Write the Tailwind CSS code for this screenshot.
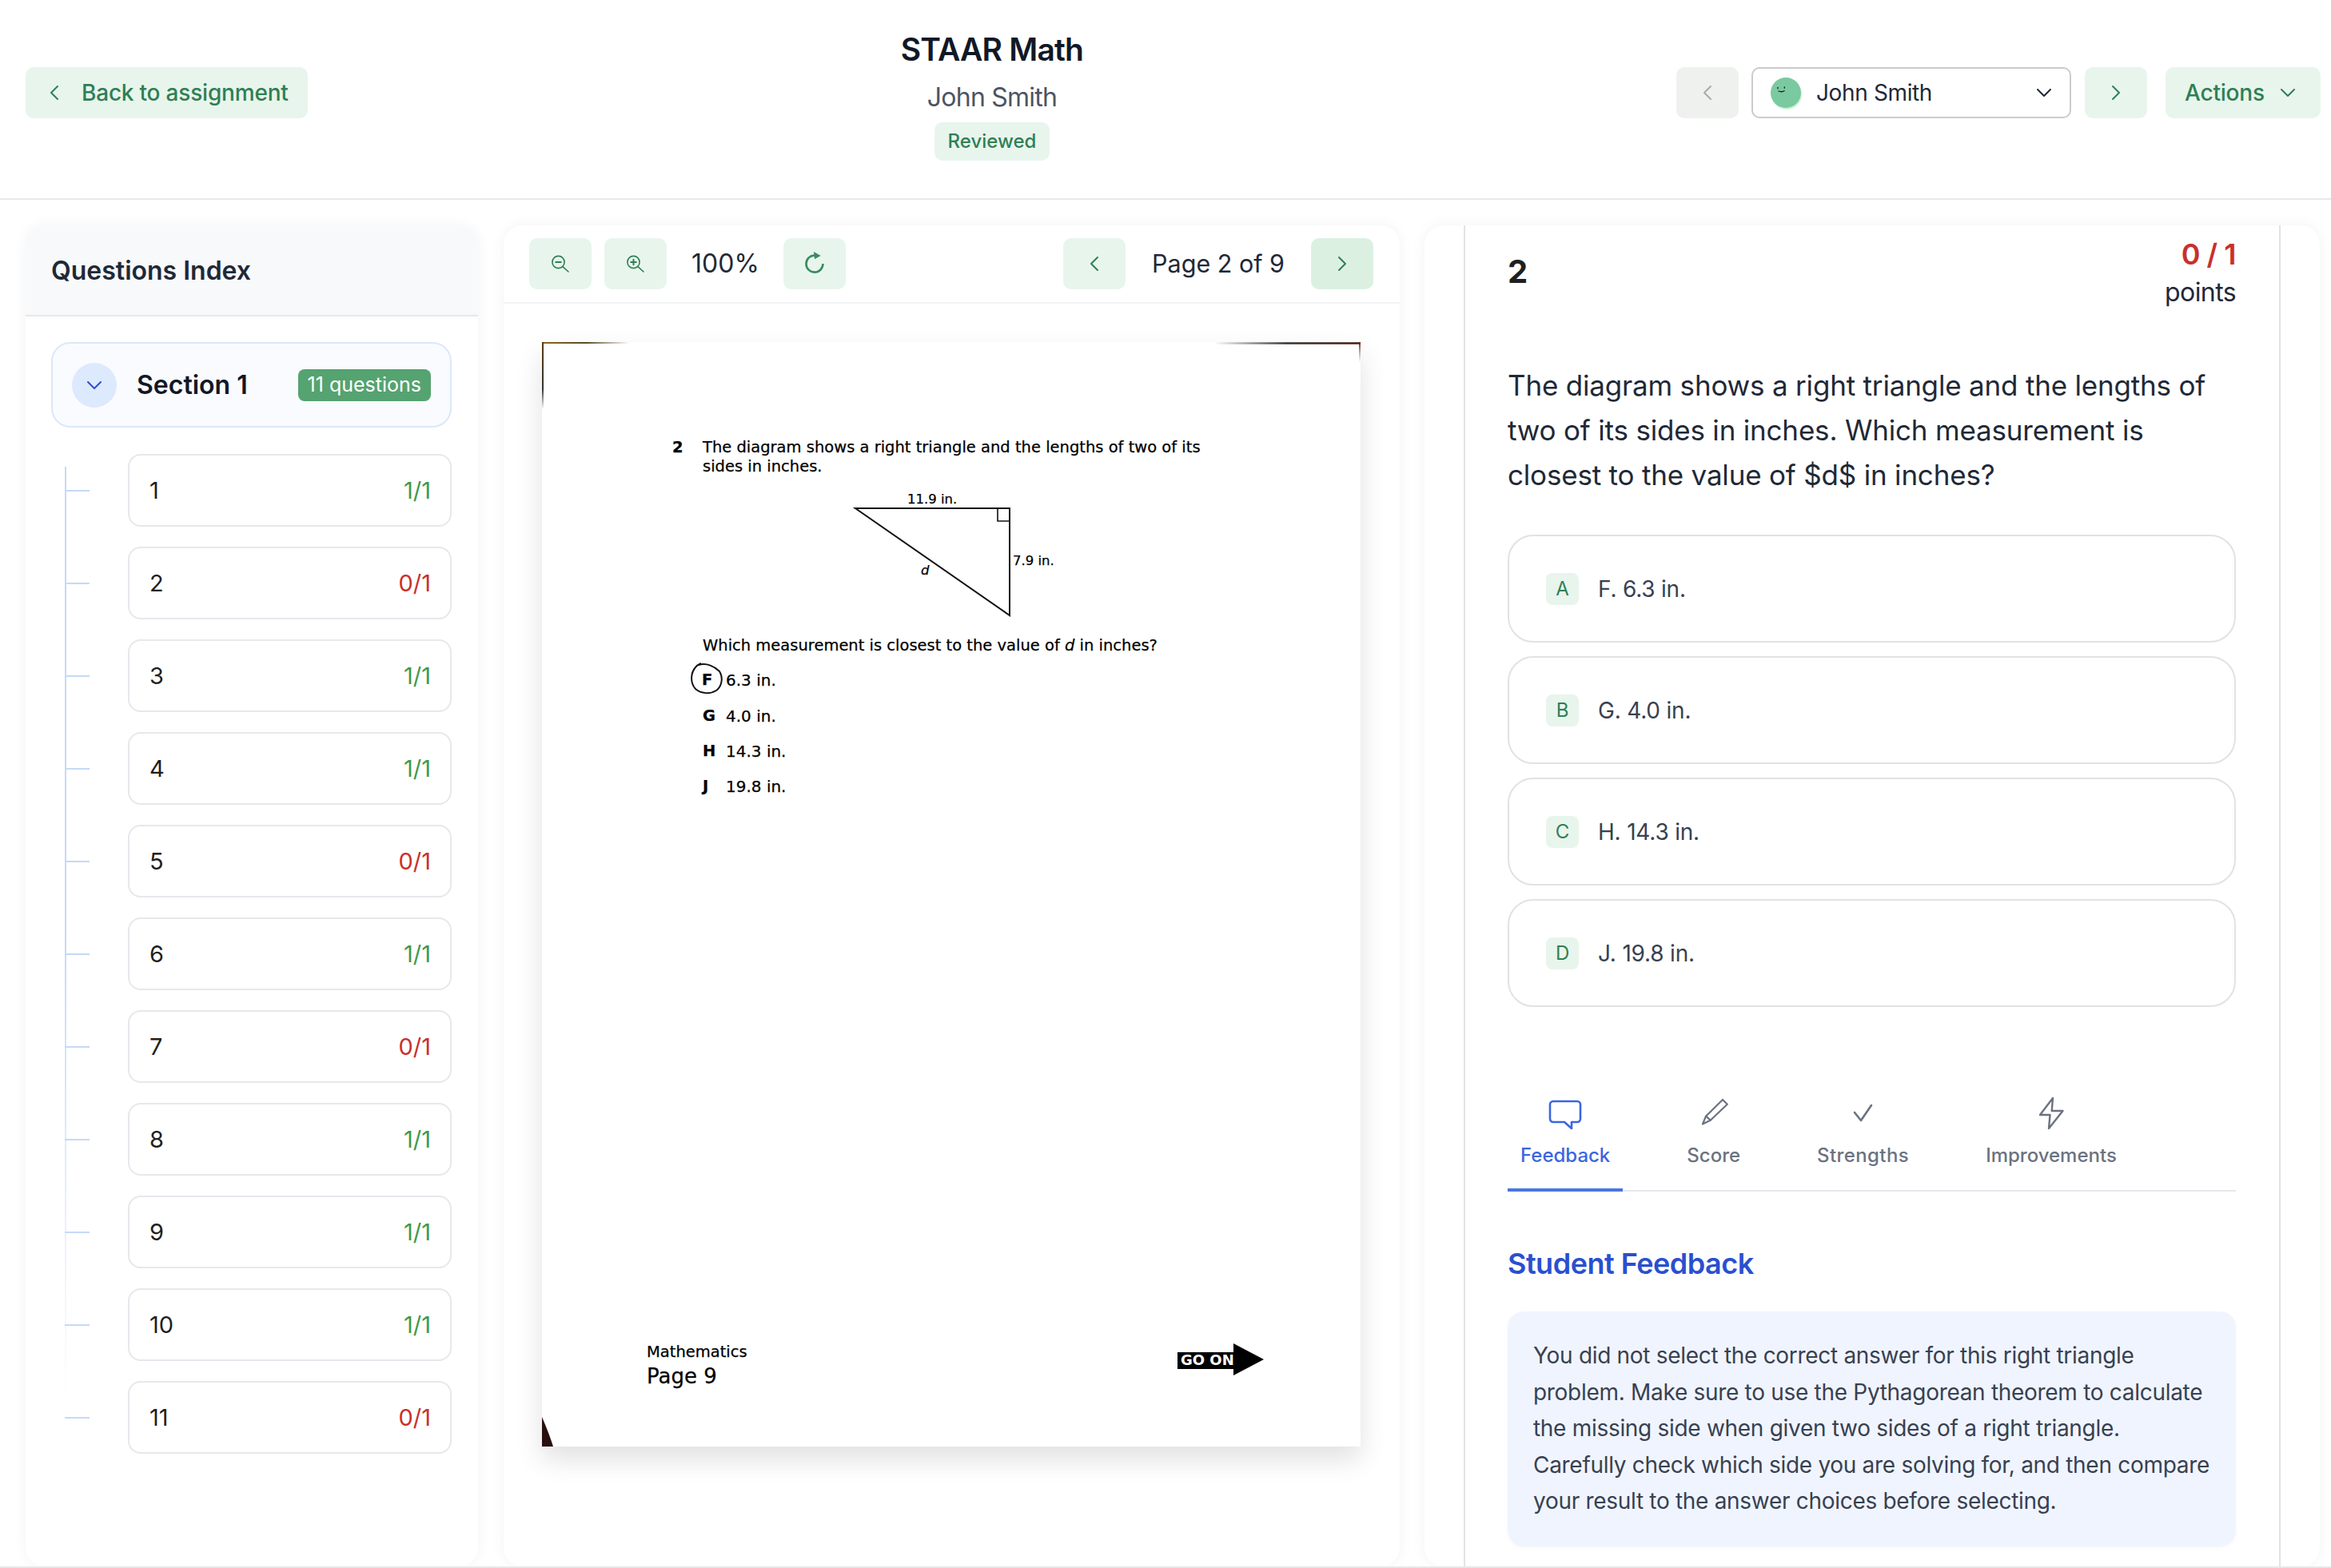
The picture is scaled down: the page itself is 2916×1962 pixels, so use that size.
<!DOCTYPE html>
<html lang="en">
<head>
    <meta charset="UTF-8">
    <title>STAAR Math - John Smith</title>
    <script src="https://cdn.jsdelivr.net/npm/@tailwindcss/browser@4"></script>
</head>
<body class="bg-white font-['Inter',sans-serif] text-[#111827] overflow-hidden">
<div class="w-[2916px] h-[1962px] flex flex-col overflow-hidden border-b-2 border-[#e5e7eb]">

    <!-- Header -->
    <header class="h-[250px] shrink-0 border-b-2 border-[#e7e7ec] pb-[16px] pl-[32px] pr-[13px] flex items-center justify-between">
        <button class="h-[64px] w-[353px] rounded-[10px] bg-[#e8f5ec] text-[#2f7f55] flex items-center pl-[30px] gap-[28px] text-[28px] font-medium tracking-[-0.2px]">
            <svg class="w-[12px] h-[20px]" viewBox="0 0 12 20" fill="none" stroke="currentColor" stroke-width="2" stroke-linecap="round" stroke-linejoin="round"><path d="M10 2 2 10l8 8"/></svg>
            <span>Back to assignment</span>
        </button>
        <div class="flex flex-col items-center">
            <div class="text-[39px] leading-[60px] font-semibold text-[#111827] tracking-[-0.8px]">STAAR Math</div>
            <div class="text-[32px] leading-[48px] text-[#4b5563] mt-[6px] tracking-[-0.75px]">John Smith</div>
            <div class="mt-[7px] h-[48px] px-[17px] rounded-[10px] bg-[#e8f5ec] text-[#2f7f55] text-[24px] font-medium flex items-center">Reviewed</div>
        </div>
        <div class="flex items-center">
            <button class="w-[78px] h-[64px] rounded-[10px] bg-[#eff1ef] text-[#a8aca9] flex items-center justify-center">
                <svg class="w-[12px] h-[20px]" viewBox="0 0 12 20" fill="none" stroke="currentColor" stroke-width="2" stroke-linecap="round" stroke-linejoin="round"><path d="M10 2 2 10l8 8"/></svg>
            </button>
            <div class="ml-[16px] w-[400px] h-[64px] rounded-[10px] border-2 border-[#cbcbcb] flex items-center pl-[22px] pr-[22px]">
                <span class="w-[38px] h-[38px] rounded-full bg-[#7bc9a0] shadow-[1px_2px_0_#c9f5d4] shrink-0">
                    <svg class="w-[38px] h-[38px]" viewBox="0 0 38 38" fill="none" stroke="#111827" stroke-width="1.3" stroke-linecap="round"><path d="M9 12.5v1.2M17.3 12v1.2M10 17c2.5 1 5 1 7-.3"/></svg>
                </span>
                <span class="ml-[19px] text-[28px] text-[#1f2937] tracking-[-0.37px]">John Smith</span>
                <svg class="ml-auto w-[20px] h-[12px]" viewBox="0 0 20 12" fill="none" stroke="#1f2937" stroke-width="2" stroke-linecap="round" stroke-linejoin="round"><path d="m2 2 8 8 8-8"/></svg>
            </div>
            <button class="ml-[17px] w-[78px] h-[64px] rounded-[10px] bg-[#e8f5ec] text-[#2f7f55] flex items-center justify-center">
                <svg class="w-[12px] h-[20px]" viewBox="0 0 12 20" fill="none" stroke="currentColor" stroke-width="2" stroke-linecap="round" stroke-linejoin="round"><path d="m2 2 8 8-8 8"/></svg>
            </button>
            <button class="ml-[23px] w-[194px] h-[64px] rounded-[10px] bg-[#e8f5ec] text-[#2f7f55] flex items-center pl-[24px] gap-[19px] text-[28px] font-medium tracking-[-0.2px]">
                <span>Actions</span>
                <svg class="w-[20px] h-[12px]" viewBox="0 0 20 12" fill="none" stroke="currentColor" stroke-width="2" stroke-linecap="round" stroke-linejoin="round"><path d="m2 2 8 8 8-8"/></svg>
            </button>
        </div>
    </header>

    <!-- Panels -->
    <main class="flex-1 min-h-0 pt-[32px] pl-[32px] flex">

        <!-- Questions index -->
        <aside class="w-[566px] shrink-0 rounded-[24px] bg-white shadow-[0_0_18px_rgba(0,0,0,0.05)] overflow-hidden">
            <div class="h-[114px] bg-[#f8f9fb] border-b-2 border-[#e7e7ec] pl-[32px] pt-[2px] flex items-center">
                <h2 class="text-[32px] font-semibold text-[#1f2937]">Questions Index</h2>
            </div>
            <div class="pt-[32px] pl-[32px] pr-[33px]">
                <div class="h-[107px] rounded-[24px] border-2 border-[#dbe7fb] bg-[#fafbff] flex items-center pl-[24px] pr-[24px] pt-[1px]">
                    <span class="w-[56px] h-[56px] rounded-full bg-[#dde9fc] flex items-center justify-center">
                        <svg class="w-[20px] h-[12px]" viewBox="0 0 20 12" fill="none" stroke="#2a4fd0" stroke-width="2" stroke-linecap="round" stroke-linejoin="round"><path d="m2 2 8 8 8-8"/></svg>
                    </span>
                    <span class="ml-[25px] text-[32px] font-semibold text-[#111827]">Section 1</span>
                    <span class="ml-auto h-[40px] px-[12px] rounded-[8px] bg-[#55a370] text-white text-[25px] flex items-center">11 questions</span>
                </div>
                <div id="questionList" class="relative mt-[33px] flex flex-col gap-[25px]">
                    <div class="absolute left-[17px] top-[16px] w-[2px] h-[1170px] bg-gradient-to-b from-[#c5d9f8] via-[#c5d9f8] to-white"></div>
                </div>
            </div>
        </aside>

        <!-- Document viewer -->
        <section class="ml-[32px] w-[1121px] shrink-0 rounded-[24px] bg-white shadow-[0_0_18px_rgba(0,0,0,0.05)] overflow-hidden">
            <div class="h-[98px] border-b-2 border-[#f3f4f6] flex items-center pl-[32px] pr-[33px]">
                <button class="w-[78px] h-[64px] rounded-[10px] bg-[#e8f5ec] flex items-center justify-center">
                    <svg class="w-[24px] h-[24px]" viewBox="0 0 24 24" fill="none" stroke="#2f7f55" stroke-width="1.6" stroke-linecap="round" stroke-linejoin="round"><circle cx="9.5" cy="10" r="7.6"/><path d="m15 15.6 7 6.4"/><path d="M6.2 10h6.6" stroke-width="2"/></svg>
                </button>
                <button class="ml-[16px] w-[78px] h-[64px] rounded-[10px] bg-[#e8f5ec] flex items-center justify-center">
                    <svg class="w-[24px] h-[24px]" viewBox="0 0 24 24" fill="none" stroke="#2f7f55" stroke-width="1.6" stroke-linecap="round" stroke-linejoin="round"><circle cx="9.5" cy="10" r="7.6"/><path d="m15 15.6 7 6.4"/><path d="M6.2 10h6.6M9.5 6.7v6.6" stroke-width="2"/></svg>
                </button>
                <span class="ml-[31px] w-[83px] text-[32px] text-[#1f2937]">100%</span>
                <button class="ml-[32px] w-[78px] h-[64px] rounded-[10px] bg-[#e8f5ec] flex items-center justify-center">
                    <svg class="w-[30px] h-[30px]" viewBox="0 0 30 30" fill="none" stroke="#3b8a60" stroke-width="2.6"><path d="M15 4.600A10.500 10.500 0 1 0 25.500 15"/><path d="M14 0l8.700 5-7.700 4.300z" fill="#3b8a60" stroke="none"/></svg>
                </button>
                <button class="ml-auto w-[78px] h-[64px] rounded-[10px] bg-[#e8f5ec] text-[#2f7f55] flex items-center justify-center">
                    <svg class="w-[12px] h-[20px]" viewBox="0 0 12 20" fill="none" stroke="currentColor" stroke-width="2" stroke-linecap="round" stroke-linejoin="round"><path d="M10 2 2 10l8 8"/></svg>
                </button>
                <span class="mx-[33px] text-[30.5px] text-[#1f2937]">Page 2 of 9</span>
                <button class="w-[78px] h-[64px] rounded-[10px] bg-[#dcf0e2] text-[#2f7f55] flex items-center justify-center">
                    <svg class="w-[12px] h-[20px]" viewBox="0 0 12 20" fill="none" stroke="currentColor" stroke-width="2" stroke-linecap="round" stroke-linejoin="round"><path d="m2 2 8 8-8 8"/></svg>
                </button>
            </div>

            <div class="pl-[48px] pt-[48px]">
                <!-- scanned test page -->
                <div class="relative w-[1024px] h-[1382px] bg-white shadow-[0_16px_32px_rgba(0,0,0,0.12)] text-black font-['DejaVu_Sans',sans-serif] [-webkit-text-stroke:0.25px_black]">
                    <svg class="absolute inset-0 w-[1024px] h-[1382px]" viewBox="0 0 1024 1382" fill="none">
                        <defs>
                            <linearGradient id="edgeTopLeft" gradientUnits="userSpaceOnUse" x1="0" y1="0" x2="110" y2="0"><stop offset="0" stop-color="#8a6a20"/><stop offset="0.5" stop-color="#5a4a28"/><stop offset="1" stop-color="#5a4a28" stop-opacity="0"/></linearGradient>
                            <linearGradient id="edgeLeft" gradientUnits="userSpaceOnUse" x1="0" y1="0" x2="0" y2="84"><stop offset="0" stop-color="#5a3a10"/><stop offset="0.7" stop-color="#333"/><stop offset="1" stop-color="#333" stop-opacity="0"/></linearGradient>
                            <linearGradient id="edgeTopRight" gradientUnits="userSpaceOnUse" x1="1024" y1="0" x2="840" y2="0"><stop offset="0" stop-color="#4a1a10"/><stop offset="0.5" stop-color="#333"/><stop offset="1" stop-color="#333" stop-opacity="0"/></linearGradient>
                            <linearGradient id="edgeRight" gradientUnits="userSpaceOnUse" x1="0" y1="0" x2="0" y2="26"><stop offset="0" stop-color="#6a2a10"/><stop offset="1" stop-color="#888" stop-opacity="0"/></linearGradient>
                        </defs>
                        <path d="M0 1h110" stroke="url(#edgeTopLeft)" stroke-width="2"/>
                        <path d="M1 0v84" stroke="url(#edgeLeft)" stroke-width="2"/>
                        <path d="M842 1.500h182" stroke="url(#edgeTopRight)" stroke-width="2.4"/>
                        <path d="M1023 0v26" stroke="url(#edgeRight)" stroke-width="2"/>
                        <path d="M0 1345c5 12 10 24 14 37H0z" fill="#2a1010"/>
                        <path d="M392 208h193v134z" stroke="#111" stroke-width="2"/>
                        <path d="M570 208v16h15" stroke="#111" stroke-width="1.6"/>
                        <path d="M196 404c10-3 20 2 26 8 5 8 3 19-4 24-8 5-19 4-26-2-7-8-6-20 0-27 2-3 5-4 7-5" stroke="#111" stroke-width="2"/>
                        <path d="M795 1264h70v-11l38 20-38 20v-8h-70z" fill="#000"/>
                    </svg>
                    <span class="absolute left-[163px] top-[120px] text-[19.5px] leading-[24px] font-bold">2</span>
                    <p class="absolute left-[201px] top-[120px] text-[19.5px] leading-[24px] whitespace-nowrap">The diagram shows a right triangle and the lengths of two of its<br>sides in inches.</p>
                    <span class="absolute left-[457px] top-[188px] text-[16.5px] leading-[18px]">11.9 in.</span>
                    <span class="absolute left-[589px] top-[265px] text-[16.5px] leading-[18px]">7.9 in.</span>
                    <span class="absolute left-[474px] top-[277px] text-[16.5px] leading-[18px] italic">d</span>
                    <p class="absolute left-[201px] top-[368px] text-[19.5px] leading-[24px] whitespace-nowrap">Which measurement is closest to the value of <span class="italic">d</span> in inches?</p>
                    <span class="absolute left-[200px] top-[411px] text-[19.5px] leading-[24px] font-bold">F</span>
                    <span class="absolute left-[230px] top-[411px] text-[20px] leading-[24px]">6.3 in.</span>
                    <span class="absolute left-[201px] top-[456px] text-[19.5px] leading-[24px] font-bold">G</span>
                    <span class="absolute left-[230px] top-[456px] text-[20px] leading-[24px]">4.0 in.</span>
                    <span class="absolute left-[201px] top-[500px] text-[19.5px] leading-[24px] font-bold">H</span>
                    <span class="absolute left-[230px] top-[500px] text-[20px] leading-[24px]">14.3 in.</span>
                    <span class="absolute left-[201px] top-[544px] text-[19.5px] leading-[24px] font-bold">J</span>
                    <span class="absolute left-[230px] top-[544px] text-[20px] leading-[24px]">19.8 in.</span>
                    <span class="absolute left-[131px] top-[1252px] text-[19.5px] leading-[24px]">Mathematics</span>
                    <span class="absolute left-[131px] top-[1278px] text-[26px] leading-[32px]">Page 9</span>
                    <span class="absolute left-[799px] top-[1265px] text-[18px] leading-[18px] font-bold text-white [-webkit-text-stroke:0]">GO ON</span>
                </div>
            </div>
        </section>

        <!-- Question detail -->
        <section class="ml-[31px] w-[1120px] shrink-0 rounded-[24px] bg-white shadow-[0_0_18px_rgba(0,0,0,0.05)] overflow-hidden pl-[49px] pr-[49px]">
            <div class="h-full border-x-2 border-[#e3e3e3] pl-[53px] pr-[54px] pt-[12px]">
                <div class="flex justify-between">
                    <div class="text-[40px] leading-[48px] font-bold text-[#1f1f1f] mt-[22px]">2</div>
                    <div class="flex flex-col items-end">
                        <div class="text-[36px] leading-[48px] font-semibold text-[#c9302c] tracking-[-0.5px]">0 / 1</div>
                        <div class="text-[32px] leading-[44px] mt-[2px] text-[#1f2937] tracking-[-0.6px]">points</div>
                    </div>
                </div>
                <p class="mt-[66px] text-[35px] leading-[56px] text-[#1f2937] tracking-[-0.19px]">The diagram shows a right triangle and the lengths of two of its sides in inches. Which measurement is closest to the value of $d$ in inches?</p>

                <div class="mt-[47px] flex flex-col gap-[17px]">
                    <div class="h-[135px] rounded-[32px] border-2 border-[#e2e2e2] flex items-center pl-[46px] text-[28px] text-[#374151] tracking-[-0.2px]"><span class="w-[41px] h-[40px] rounded-[8px] bg-[#e8f5ec] text-[#2f7f55] text-[24px] flex items-center justify-center mr-[24px]">A</span>F. 6.3 in.</div>
                    <div class="h-[135px] rounded-[32px] border-2 border-[#e2e2e2] flex items-center pl-[46px] text-[28px] text-[#374151] tracking-[-0.2px]"><span class="w-[41px] h-[40px] rounded-[8px] bg-[#e8f5ec] text-[#2f7f55] text-[24px] flex items-center justify-center mr-[24px]">B</span>G. 4.0 in.</div>
                    <div class="h-[135px] rounded-[32px] border-2 border-[#e2e2e2] flex items-center pl-[46px] text-[28px] text-[#374151] tracking-[-0.2px]"><span class="w-[41px] h-[40px] rounded-[8px] bg-[#e8f5ec] text-[#2f7f55] text-[24px] flex items-center justify-center mr-[24px]">C</span>H. 14.3 in.</div>
                    <div class="h-[135px] rounded-[32px] border-2 border-[#e2e2e2] flex items-center pl-[46px] text-[28px] text-[#374151] tracking-[-0.2px]"><span class="w-[41px] h-[40px] rounded-[8px] bg-[#e8f5ec] text-[#2f7f55] text-[24px] flex items-center justify-center mr-[24px]">D</span>J. 19.8 in.</div>
                </div>

                <!-- Tabs -->
                <div class="mt-[102px] flex gap-[64px] border-b-2 border-[#e7e7ec] text-[24px] font-medium text-[#6b7280]">
                    <div class="-mb-[2px] px-[16px] h-[129px] border-b-4 border-[#4a74e0] text-[#3b66e0] flex flex-col items-center pt-[12px]">
                        <svg class="w-[42px] h-[40px]" viewBox="0 0 42 40" fill="none" stroke="currentColor" stroke-width="2.6" stroke-linecap="round" stroke-linejoin="round"><path d="M6 4h30a4 4 0 0 1 4 4v18a4 4 0 0 1-4 4h-7v8l-9-8H6a4 4 0 0 1-4-4V8a4 4 0 0 1 4-4z"/></svg>
                        <span class="mt-[16px] leading-[32px]">Feedback</span>
                    </div>
                    <div class="px-[16px] flex flex-col items-center pt-[12px]">
                        <svg class="w-[40px] h-[40px]" viewBox="0 0 40 40" fill="none" stroke="currentColor" stroke-width="2.2" stroke-linecap="round" stroke-linejoin="round"><path d="M6 32.500 10 22.700 31 2l5.800 5.700-21.100 20z"/><path d="m10 22.700 5.700 5"/></svg>
                        <span class="mt-[16px] leading-[32px]">Score</span>
                    </div>
                    <div class="px-[16px] flex flex-col items-center pt-[12px] tracking-[0.4px]">
                        <svg class="w-[40px] h-[40px]" viewBox="0 0 40 40" fill="none" stroke="currentColor" stroke-width="2.6" stroke-linecap="round" stroke-linejoin="round"><path d="m9 18 8 10L30 9"/></svg>
                        <span class="mt-[16px] leading-[32px]">Strengths</span>
                    </div>
                    <div class="px-[16px] flex flex-col items-center pt-[12px]">
                        <svg class="w-[40px] h-[40px] overflow-visible" viewBox="0 0 40 40" fill="none" stroke="currentColor" stroke-width="2.4" stroke-linecap="round" stroke-linejoin="round"><path d="M22 0 6 21h12.500L17 38l17.500-22H20.700z"/></svg>
                        <span class="mt-[16px] leading-[32px]">Improvements</span>
                    </div>
                </div>

                <h3 class="mt-[65px] text-[36px] leading-[50px] font-semibold text-[#2a4fd0] tracking-[-0.5px]">Student Feedback</h3>
                <div class="mt-[35px] rounded-[20px] bg-[#f0f4fe] shadow-[0_2px_6px_rgba(0,0,0,0.03)] pt-[33px] pb-[33px] pl-[32px] pr-[30px] text-[28px] leading-[45.6px] text-[#374151] tracking-[-0.3px]">You did not select the correct answer for this right triangle problem. Make sure to use the Pythagorean theorem to calculate the missing side when given two sides of a right triangle. Carefully check which side you are solving for, and then compare your result to the answer choices before selecting.</div>
            </div>
        </section>
    </main>
</div>

<script>
    const questions = [
        { n: 1, score: "1/1" }, { n: 2, score: "0/1" }, { n: 3, score: "1/1" }, { n: 4, score: "1/1" },
        { n: 5, score: "0/1" }, { n: 6, score: "1/1" }, { n: 7, score: "0/1" }, { n: 8, score: "1/1" },
        { n: 9, score: "1/1" }, { n: 10, score: "1/1" }, { n: 11, score: "0/1" }
    ];

    // Question rows
    const list = document.getElementById("questionList");
    questions.forEach(q => {
        const color = q.score === "1/1" ? "text-[#3f9a4b]" : "text-[#c9302c]";
        list.innerHTML += `
            <div class="relative flex items-center">
                <div class="ml-[17px] w-[31px] h-[2px] bg-[#c5d9f8]"></div>
                <div class="ml-[48px] flex-1 h-[91px] rounded-[16px] border-2 border-[#e7e7ec] flex items-center justify-between pl-[25px] pr-[24px] text-[29px] text-[#1f1f1f]">
                    <span>${q.n}</span><span class="${color}">${q.score}</span>
                </div>
            </div>`;
    });
</script>
</body>
</html>
